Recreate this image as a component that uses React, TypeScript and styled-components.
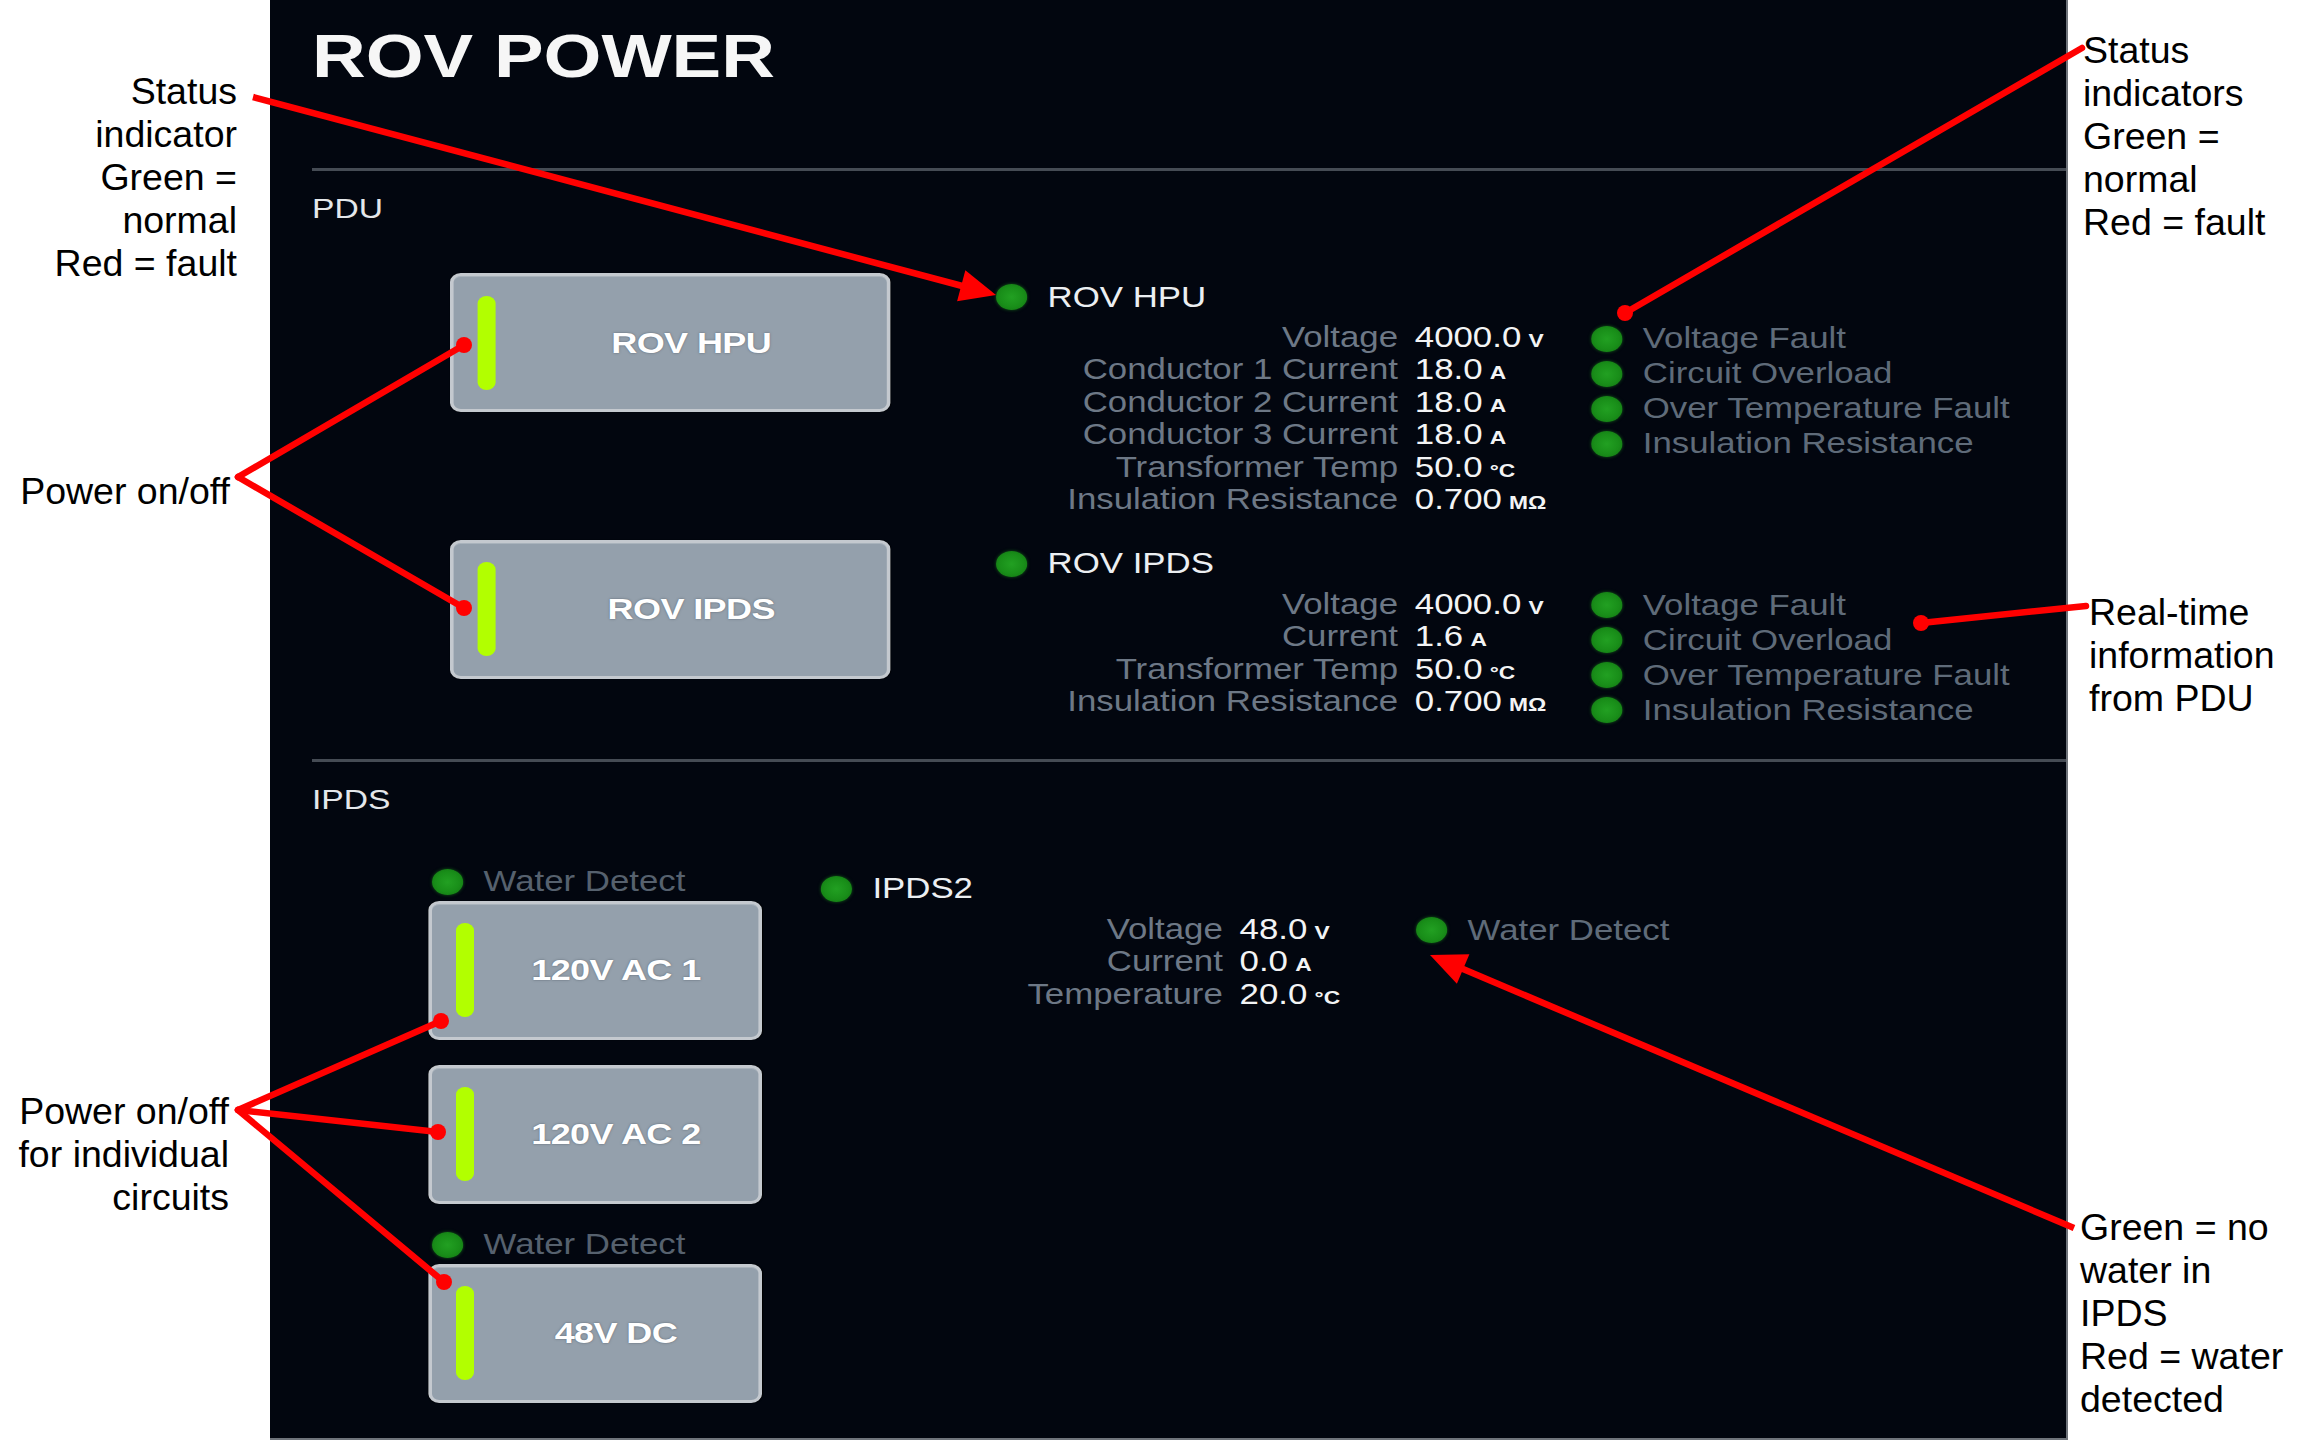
import { Fragment } from 'react';
import styled, { createGlobalStyle } from 'styled-components';

// the screenshot of the console is stretched sideways, so its content is laid out
// narrower and widened back with scaleX
const STRETCH = 1.2;
const PANEL_W = 1798;

const GlobalStyle = createGlobalStyle`
  html, body {
    margin: 0;
    padding: 0;
    background: #ffffff;
  }
  body {
    font-family: "Liberation Sans", Arial, sans-serif;
  }
`;

const Page = styled.div`
  position: relative;
  display: flex;
  width: 2298px;
  height: 1440px;
  overflow: hidden;
  background: #ffffff;
`;

const NoteColumn = styled.div<{ $side: 'left' | 'right' }>`
  width: ${({ $side }) => ($side === 'left' ? 270 : 230)}px;
  flex-shrink: 0;
  display: flex;
  flex-direction: column;
  align-items: ${({ $side }) => ($side === 'left' ? 'flex-end' : 'flex-start')};
`;

const Note = styled.div<{ $align: 'left' | 'right'; $top: number; $inset: number }>`
  margin-top: ${({ $top }) => $top}px;
  margin-left: ${({ $align, $inset }) => ($align === 'left' ? $inset : 0)}px;
  margin-right: ${({ $align, $inset }) => ($align === 'right' ? $inset : 0)}px;
  text-align: ${({ $align }) => $align};
  font-size: 37.5px;
  line-height: 43px;
  color: #000000;
  white-space: nowrap;
`;

const Panel = styled.div`
  width: ${PANEL_W}px;
  height: 1440px;
  flex-shrink: 0;
  box-sizing: border-box;
  background: #02060f;
  border-right: 2px solid #6f747b;
  border-bottom: 2px solid #6f747b;
  overflow: hidden;
`;

const PanelInner = styled.div`
  width: ${(PANEL_W - 2) / STRETCH}px;
  box-sizing: border-box;
  padding-left: 35px;
  transform: scaleX(${STRETCH});
  transform-origin: 0 0;
`;

const Title = styled.h1`
  margin: 0;
  padding-top: 26px;
  font-size: 62px;
  line-height: 60px;
  font-weight: bold;
  color: #f6f6f6;
  white-space: nowrap;
`;

const Divider = styled.div<{ $top: number }>`
  margin-top: ${({ $top }) => $top}px;
  height: 3px;
  background: #454b54;
`;

const SectionLabel = styled.div`
  margin-top: 22px;
  font-size: 28px;
  line-height: 32px;
  color: #e4e7ea;
`;

const DeviceList = styled.div`
  display: flex;
  flex-direction: column;
  gap: 24.6px;
  margin-top: 48px;
  padding-left: 115px;
`;

const DeviceRow = styled.div`
  display: flex;
  align-items: flex-start;
  gap: 88px;
`;

const PowerButton = styled.div<{ $w: number }>`
  width: ${({ $w }) => $w}px;
  height: 139px;
  flex-shrink: 0;
  box-sizing: border-box;
  display: flex;
  align-items: center;
  padding-left: 20px;
  background: #94a0ac;
  border: 3px solid #c4c9cf;
  border-radius: 9px;
  box-shadow: inset 0 1px 0 rgba(255, 255, 255, 0.2), 0 0 1px #000;
`;

const PowerBar = styled.span`
  width: 15px;
  height: 94px;
  flex-shrink: 0;
  border-radius: 8px;
  background: #b2ff00;
`;

const PowerLabel = styled.span`
  flex: 1;
  text-align: center;
  font-size: 30px;
  font-weight: bold;
  letter-spacing: -0.5px;
  color: #ffffff;
  white-space: nowrap;
  text-shadow: 0 0 2px rgba(40, 50, 60, 0.55);
`;

const Dot = styled.span`
  width: 26px;
  height: 26px;
  flex-shrink: 0;
  border-radius: 50%;
  background: radial-gradient(circle, #22a022 0%, #198e19 55%, #117011 100%);
  box-shadow: 0 0 3px rgba(30, 150, 30, 0.6);
`;

const DataBlock = styled.div<{ $top?: number }>`
  display: flex;
  flex-direction: column;
  margin-top: ${({ $top }) => $top ?? 0}px;
`;

const BlockHeader = styled.div`
  display: flex;
  align-items: center;
  gap: 17px;
  height: 48px;
  font-size: 29px;
  color: #eceff2;
  white-space: nowrap;
`;

const BlockBody = styled.div`
  display: flex;
  align-items: flex-start;
`;

const Readings = styled.div`
  display: grid;
  grid-template-columns: 335px 147px;
  grid-auto-rows: 32.4px;
  column-gap: 14px;
  font-size: 29px;
  line-height: 32.4px;
  white-space: nowrap;
`;

const ReadingLabel = styled.span`
  text-align: right;
  color: #6d7886;
`;

const ReadingValue = styled.span`
  color: #f3f4f5;
`;

const Unit = styled.span`
  margin-left: 6px;
  font-size: 19px;
  font-weight: bold;
`;

const StatusList = styled.div`
  display: flex;
  flex-direction: column;
`;

const StatusRow = styled.div`
  height: 35px;
  display: flex;
  align-items: center;
  gap: 17px;
  font-size: 29px;
  color: #5f6b79;
  white-space: nowrap;
`;

const CircuitArea = styled.div`
  display: flex;
  align-items: flex-start;
  gap: 49.5px;
  margin-top: 47px;
  padding-left: 97px;
`;

const CircuitColumn = styled.div`
  display: flex;
  flex-direction: column;
  width: 277.5px;
`;

const CircuitGroup = styled.div`
  display: flex;
  flex-direction: column;

  & + & {
    margin-top: 22px;
  }
`;

const ButtonStack = styled.div`
  display: flex;
  flex-direction: column;
  gap: 25px;
`;

const WaterRow = styled.div`
  height: 38px;
  display: flex;
  align-items: center;
  gap: 17px;
  padding-left: 3px;
  font-size: 29px;
  color: #56616e;
  white-space: nowrap;
`;

const Overlay = styled.svg`
  position: absolute;
  left: 0;
  top: 0;
  pointer-events: none;
`;

type Reading = [string, string, string];

const hpuReadings: Reading[] = [
  ['Voltage', '4000.0', 'V'],
  ['Conductor 1 Current', '18.0', 'A'],
  ['Conductor 2 Current', '18.0', 'A'],
  ['Conductor 3 Current', '18.0', 'A'],
  ['Transformer Temp', '50.0', '°C'],
  ['Insulation Resistance', '0.700', 'MΩ'],
];

const ipdsReadings: Reading[] = [
  ['Voltage', '4000.0', 'V'],
  ['Current', '1.6', 'A'],
  ['Transformer Temp', '50.0', '°C'],
  ['Insulation Resistance', '0.700', 'MΩ'],
];

const ipds2Readings: Reading[] = [
  ['Voltage', '48.0', 'V'],
  ['Current', '0.0', 'A'],
  ['Temperature', '20.0', '°C'],
];

const faults = ['Voltage Fault', 'Circuit Overload', 'Over Temperature Fault', 'Insulation Resistance'];

function Device({ name, readings, status, top }: { name: string; readings: Reading[]; status: string[]; top?: number }) {
  return (
    <DataBlock $top={top}>
      <BlockHeader>
        <Dot />
        {name}
      </BlockHeader>
      <BlockBody>
        <Readings>
          {readings.map(([label, value, unit]) => (
            <Fragment key={label}>
              <ReadingLabel>{label}</ReadingLabel>
              <ReadingValue>
                {value}
                <Unit>{unit}</Unit>
              </ReadingValue>
            </Fragment>
          ))}
        </Readings>
        <StatusList>
          {status.map((s) => (
            <StatusRow key={s}>
              <Dot />
              {s}
            </StatusRow>
          ))}
        </StatusList>
      </BlockBody>
    </DataBlock>
  );
}

function Power({ label, width }: { label: string; width: number }) {
  return (
    <PowerButton $w={width}>
      <PowerBar />
      <PowerLabel>{label}</PowerLabel>
    </PowerButton>
  );
}

function Lines({ lines }: { lines: string[] }) {
  return (
    <>
      {lines.map((l) => (
        <div key={l}>{l}</div>
      ))}
    </>
  );
}

const RED = '#ff0000';

function Arrow({ x1, y1, x2, y2 }: { x1: number; y1: number; x2: number; y2: number }) {
  const d = Math.hypot(x2 - x1, y2 - y1);
  const ux = (x2 - x1) / d;
  const uy = (y2 - y1) / d;
  const len = 36;
  const half = 16;
  const bx = x2 - ux * len;
  const by = y2 - uy * len;
  const pts = `${x2},${y2} ${bx - uy * half},${by + ux * half} ${bx + uy * half},${by - ux * half}`;
  return (
    <g>
      <line x1={x1} y1={y1} x2={bx + ux * 4} y2={by + uy * 4} stroke={RED} strokeWidth={6.5} />
      <polygon points={pts} fill={RED} />
    </g>
  );
}

function Pointer({ x1, y1, x2, y2 }: { x1: number; y1: number; x2: number; y2: number }) {
  return (
    <g>
      <line x1={x1} y1={y1} x2={x2} y2={y2} stroke={RED} strokeWidth={6.5} strokeLinecap="round" />
      <circle cx={x2} cy={y2} r={8} fill={RED} />
    </g>
  );
}

export default function App() {
  return (
    <Page>
      <GlobalStyle />
      <NoteColumn $side="left">
        <Note $align="right" $top={70} $inset={33}>
          <Lines lines={['Status', 'indicator', 'Green =', 'normal', 'Red = fault']} />
        </Note>
        <Note $align="right" $top={185} $inset={40}>
          Power on/off
        </Note>
        <Note $align="right" $top={577} $inset={41}>
          <Lines lines={['Power on/off', 'for individual', 'circuits']} />
        </Note>
      </NoteColumn>

      <Panel>
        <PanelInner>
          <Title>ROV POWER</Title>
          <Divider $top={82} />
          <SectionLabel>PDU</SectionLabel>
          <DeviceList>
            <DeviceRow>
              <Power label="ROV HPU" width={367} />
              <Device name="ROV HPU" readings={hpuReadings} status={faults} />
            </DeviceRow>
            <DeviceRow>
              <Power label="ROV IPDS" width={367} />
              <Device name="ROV IPDS" readings={ipdsReadings} status={faults} />
            </DeviceRow>
          </DeviceList>
          <Divider $top={31} />
          <SectionLabel>IPDS</SectionLabel>
          <CircuitArea>
            <CircuitColumn>
              <CircuitGroup>
                <WaterRow>
                  <Dot />
                  Water Detect
                </WaterRow>
                <ButtonStack>
                  <Power label="120V AC 1" width={277.5} />
                  <Power label="120V AC 2" width={277.5} />
                </ButtonStack>
              </CircuitGroup>
              <CircuitGroup>
                <WaterRow>
                  <Dot />
                  Water Detect
                </WaterRow>
                <ButtonStack>
                  <Power label="48V DC" width={277.5} />
                </ButtonStack>
              </CircuitGroup>
            </CircuitColumn>
            <Device name="IPDS2" readings={ipds2Readings} status={['Water Detect']} top={2} />
          </CircuitArea>
        </PanelInner>
      </Panel>

      <NoteColumn $side="right">
        <Note $align="left" $top={29} $inset={15}>
          <Lines lines={['Status', 'indicators', 'Green =', 'normal', 'Red = fault']} />
        </Note>
        <Note $align="left" $top={347} $inset={21}>
          <Lines lines={['Real-time', 'information', 'from PDU']} />
        </Note>
        <Note $align="left" $top={486} $inset={12}>
          <Lines lines={['Green = no', 'water in', 'IPDS', 'Red = water', 'detected']} />
        </Note>
      </NoteColumn>

      <Overlay width={2298} height={1440} viewBox="0 0 2298 1440">
        <Arrow x1={253} y1={97} x2={996} y2={295} />
        <Pointer x1={2082} y1={48} x2={1625} y2={313} />
        <Pointer x1={238} y1={477} x2={464} y2={345} />
        <Pointer x1={238} y1={477} x2={464} y2={608} />
        <Pointer x1={2086} y1={606} x2={1921} y2={623} />
        <Pointer x1={238} y1={1110} x2={441} y2={1021} />
        <Pointer x1={238} y1={1110} x2={438} y2={1132} />
        <Pointer x1={238} y1={1110} x2={444} y2={1282} />
        <Arrow x1={2074} y1={1228} x2={1430} y2={955} />
      </Overlay>
    </Page>
  );
}
